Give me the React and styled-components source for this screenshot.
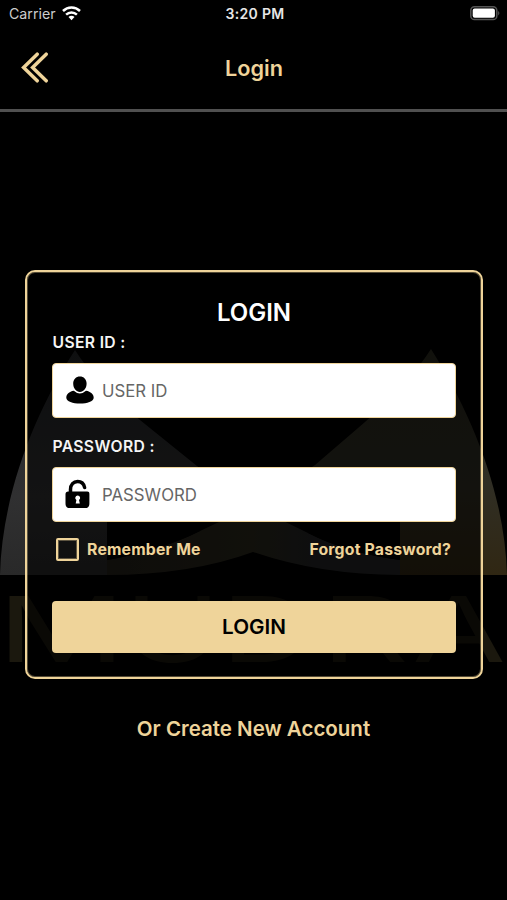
import React, { useState } from 'react';
import styled, { createGlobalStyle } from 'styled-components';

const GOLD = '#efd49a';

const App = () => {
  const [remember, setRemember] = useState(false);

  return (
    <>
      <GlobalStyle />
      <Screen>
        <BrandBackground />
        <StatusBar>
          <Carrier>
            Carrier
            <WifiIcon />
          </Carrier>
          <Time>3:20 PM</Time>
          <BatteryIcon />
        </StatusBar>
        <Header>
          <BackButton aria-label='Back'>
            <svg width='28' height='32' viewBox='0 0 28 32'>
              <path
                d='M16.2 2.2 2.6 15.6l13.6 13.2M25.2 2.2 11.6 15.6l13.6 13.2'
                fill='none'
                stroke={GOLD}
                strokeWidth='3.5'
                strokeLinecap='round'
              />
            </svg>
          </BackButton>
          <HeaderTitle>Login</HeaderTitle>
        </Header>
        <Card onSubmit={(e) => e.preventDefault()}>
          <CardTitle>LOGIN</CardTitle>
          <Label htmlFor='userId'>USER ID :</Label>
          <Field>
            <UserIcon />
            <Input id='userId' placeholder='USER ID' />
          </Field>
          <Label htmlFor='password' $second>
            PASSWORD :
          </Label>
          <Field>
            <LockIcon />
            <Input id='password' type='password' placeholder='PASSWORD' />
          </Field>
          <Options>
            <Remember>
              <Checkbox
                type='checkbox'
                checked={remember}
                onChange={() => setRemember(!remember)}
              />
              <span>Remember Me</span>
            </Remember>
            <ForgotLink>Forgot Password?</ForgotLink>
          </Options>
          <SubmitButton>LOGIN</SubmitButton>
        </Card>
        <CreateLink>Or Create New Account</CreateLink>
      </Screen>
    </>
  );
};

const letters = [
  { char: 'M', x: -3, width: 129 },
  { char: 'U', x: 124, width: 97 },
  { char: 'D', x: 221, width: 92 },
  { char: 'R', x: 321, width: 88 },
  { char: 'A', x: 412, width: 94 },
];

const BrandBackground = () => (
  <Brand viewBox='0 0 507 340' aria-hidden='true'>
    <defs>
      <linearGradient id='silver' x1='0' y1='0' x2='0' y2='1'>
        <stop offset='0' stopColor='#25272a' />
        <stop offset='0.65' stopColor='#303031' />
        <stop offset='1' stopColor='#292929' />
      </linearGradient>
      <linearGradient id='bronze' x1='0' y1='0' x2='0' y2='1'>
        <stop offset='0' stopColor='#2b2b20' />
        <stop offset='0.6' stopColor='#302e24' />
        <stop offset='1' stopColor='#302713' />
      </linearGradient>
      <linearGradient id='bronzeBand' x1='1' y1='0' x2='0' y2='0'>
        <stop offset='0' stopColor='#2b291d' />
        <stop offset='1' stopColor='#24211b' />
      </linearGradient>
      <linearGradient id='silverBand' x1='0' y1='0' x2='1' y2='0'>
        <stop offset='0' stopColor='#2b291d' />
        <stop offset='0.4' stopColor='#242526' />
        <stop offset='1' stopColor='#242526' />
      </linearGradient>
    </defs>
    <path
      d='M75 10Q95 42 140 80L197 126 253 166 107 190V235H0C2 155 34 74 75 10Z'
      fill='url(#silver)'
    />
    <path
      d='M431 9Q410 42 365 82L315 125 253 166 400 190V235H507C505 155 472 74 431 9Z'
      fill='url(#bronze)'
    />
    <path d='M253 166 308 193Q347 213 400 220V235Q320 235 253 212Z' fill='url(#silverBand)' />
    <path d='M253 166 200 191Q160 211 107 220V235Q190 235 253 212Z' fill='url(#bronzeBand)' />
    <path d='M107 176 180 178 200 191Q160 211 107 220Z' fill='#000' />
    <path d='M400 176 325 178 308 193Q347 213 400 220Z' fill='#000' />
    {letters.map(({ char, x, width }) => (
      <text
        key={char}
        x={x}
        y='322'
        textLength={width}
        lengthAdjust='spacingAndGlyphs'
        fill='#1b180e'
      >
        {char}
      </text>
    ))}
  </Brand>
);

const WifiIcon = () => (
  <svg width='19' height='15' viewBox='0 0 19 15'>
    <g fill='none' stroke='#fff' strokeWidth='2.5'>
      <path d='M1 5a12.2 12.2 0 0 1 17 0' />
      <path d='M4.1 8.6a7.8 7.8 0 0 1 10.8 0' />
    </g>
    <path d='M6.5 11.1a4.2 4.2 0 0 1 6 0l-3 3.1Z' fill='#fff' />
  </svg>
);

const BatteryIcon = () => (
  <Battery width='31' height='15' viewBox='0 0 31 15'>
    <rect x='.8' y='.8' width='26' height='12.8' rx='3.7' fill='none' stroke='#555' strokeWidth='1.5' />
    <rect x='2.7' y='2.6' width='22.2' height='9.2' rx='2' fill='#fff' />
    <path d='M28.3 5.1q2 2.1 0 4.4Z' fill='#666' />
  </Battery>
);

const UserIcon = () => (
  <svg width='28' height='30' viewBox='0 0 28 30'>
    <path d='M7.2 8.6C7.2 4 10.1 1.4 13.9 1.4s6.7 2.6 6.7 7.2c0 4.9-3.1 8.4-6.7 8.4s-6.7-3.5-6.7-8.4Z' />
    <path d='M7.8 15.7Q13.8 21.2 20 15.7C24.8 16.4 27.7 19.3 27.7 22.7 27.7 26.5 21.1 28.6 14 28.6S.3 26.5.3 22.7c0-3.4 2.7-6.3 7.5-7Z' />
  </svg>
);

const LockIcon = () => (
  <svg width='28' height='30' viewBox='0 0 28 30'>
    <path
      d='M4.5 15V10.5C4.5 5.4 7.5 2.5 11.6 2.5c3.8 0 6.2 2.2 7 6'
      fill='none'
      stroke='#000'
      strokeWidth='3.5'
      strokeLinecap='round'
    />
    <path d='M2.2 12.4h19c1.5 0 2.2.9 2.2 2.3v9.5c0 3.5-1.4 4.9-4.6 4.9H4.1C1 29.1-.5 27.7-.5 24.2v-9c0-1.8 1-2.8 2.7-2.8Z' />
    <path d='M11.7 16.5a2.5 2.5 0 0 0-1.3 4.6l-.7 3.3h4.1l-.8-3.3a2.5 2.5 0 0 0-1.3-4.6Z' fill='#fff' />
  </svg>
);

const GlobalStyle = createGlobalStyle`
  * {
    box-sizing: border-box;
  }
  body {
    margin: 0;
    background: #000;
  }
  body, button, input {
    font-family: Inter, 'Liberation Sans', sans-serif;
  }
  button {
    padding: 0;
    border: 0;
    background: none;
  }
`;

const Screen = styled.main`
  position: relative;
  isolation: isolate;
  display: flex;
  flex-direction: column;
  width: 507px;
  height: 900px;
  overflow: hidden;
  background: #000;
`;

const Brand = styled.svg`
  position: absolute;
  z-index: -1;
  top: 340px;
  left: 0;
  width: 507px;
  height: 340px;
  font-family: Inter, sans-serif;
  font-size: 91px;
  font-weight: 400;
`;

const StatusBar = styled.div`
  display: grid;
  grid-template-columns: 1fr auto 1fr;
  align-items: center;
  height: 27px;
  padding: 0 6px 0 9px;
  color: #e6e6e6;
  font-size: 14.2px;
`;

const Carrier = styled.div`
  display: flex;
  align-items: center;
  gap: 6px;
  color: #ccc;
`;

const Time = styled.div`
  font-weight: 600;
  font-size: 14px;
  letter-spacing: 0.35px;
`;

const Battery = styled.svg`
  justify-self: end;
`;

const Header = styled.header`
  display: grid;
  grid-template-columns: 1fr auto 1fr;
  align-items: center;
  height: 85px;
  padding: 0 21px;
  border-bottom: 3px solid #505050;
`;

const BackButton = styled.button`
  display: flex;
  justify-self: start;
`;

const HeaderTitle = styled.h1`
  margin: 0;
  padding-left: 1px;
  color: ${GOLD};
  font-size: 21.7px;
  font-weight: 600;
`;

const Card = styled.form`
  display: flex;
  flex-direction: column;
  width: 458px;
  height: 409px;
  margin: 158px 0 0 25px;
  padding: 25px 25px 0;
  border: 2px solid ${GOLD};
  border-radius: 10px;
  box-shadow: inset 0 0 0 1px rgba(239, 212, 154, 0.35);
  background: rgba(0, 0, 0, 0.6);
`;

const CardTitle = styled.h2`
  margin: 0;
  color: #fff;
  font-size: 24px;
  font-weight: 600;
  line-height: 32px;
  text-align: center;
`;

const Label = styled.label`
  height: 34px;
  margin-top: ${({ $second }) => ($second ? '15px' : '0')};
  padding-left: 0.5px;
  color: #f5f5f5;
  font-size: 15.7px;
  font-weight: 600;
  line-height: 28px;
  letter-spacing: 0.35px;
`;

const Field = styled.div`
  display: flex;
  align-items: center;
  height: 55px;
  padding-left: 13px;
  border: 1px solid ${GOLD};
  border-radius: 4px;
  background: #fff;

  svg {
    flex: none;
    overflow: visible;
    margin-top: -2px;
  }
`;

const Input = styled.input`
  flex: 1;
  min-width: 0;
  padding: 0 0 0 8px;
  border: 0;
  outline: 0;
  background: transparent;
  font-size: 16.8px;

  &::placeholder {
    color: #666;
    opacity: 1;
  }
`;

const Options = styled.div`
  display: flex;
  align-items: center;
  justify-content: space-between;
  height: 54px;
  padding: 0 5px 0 4px;
  color: ${GOLD};
  font-size: 15.8px;
  font-weight: 700;
  letter-spacing: 0.2px;
`;

const Remember = styled.label`
  display: flex;
  align-items: center;
  gap: 8px;
`;

const Checkbox = styled.input`
  appearance: none;
  width: 23px;
  height: 23px;
  margin: 0;
  border: 2px solid ${GOLD};
  border-radius: 2px;
  box-shadow: inset 0 0 0 1px rgba(239, 212, 154, 0.35);

  &:checked {
    background: ${GOLD};
  }
`;

const ForgotLink = styled.span`
  cursor: pointer;
`;

const SubmitButton = styled.button`
  height: 52px;
  margin-top: 25px;
  padding-bottom: 2px;
  border-radius: 4px;
  background: ${GOLD};
  color: #000;
  font-size: 20.7px;
  font-weight: 600;
`;

const CreateLink = styled.button`
  align-self: center;
  margin-top: 36px;
  color: ${GOLD};
  font-size: 20.5px;
  font-weight: 600;
  line-height: 28px;
`;

export default App;
